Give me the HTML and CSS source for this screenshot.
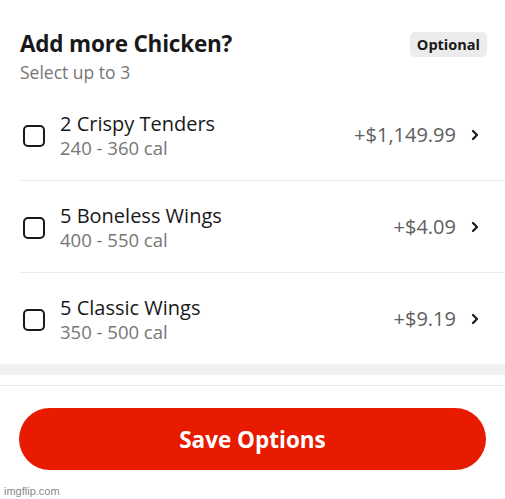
FILE: index.html
```html
<!DOCTYPE html>
<html lang="en">
<head>
    <meta charset="UTF-8">
    <meta name="viewport" content="width=device-width, initial-scale=1.0">
    <title>Add more Chicken?</title>
    <link rel="stylesheet" href="styles.css">
</head>
<body>
    <div class="header">
        <div class="header-top">
            <h1>Add more Chicken?</h1>
            <span class="badge">Optional</span>
        </div>
        <p class="sub">Select up to 3</p>
    </div>

    <div class="options">
        <div class="option">
            <span class="check"></span>
            <div class="info">
                <div class="name">2 Crispy Tenders</div>
                <div class="cal">240 - 360 cal</div>
            </div>
            <span class="price">+$1,149.99</span>
            <svg class="chev" viewBox="0 0 10 12" width="10" height="12"><path d="M3 2 L7 6 L3 10" fill="none" stroke="#191919" stroke-width="2.2" stroke-linecap="round" stroke-linejoin="round"/></svg>
        </div>
        <div class="option">
            <span class="check"></span>
            <div class="info">
                <div class="name">5 Boneless Wings</div>
                <div class="cal">400 - 550 cal</div>
            </div>
            <span class="price">+$4.09</span>
            <svg class="chev" viewBox="0 0 10 12" width="10" height="12"><path d="M3 2 L7 6 L3 10" fill="none" stroke="#191919" stroke-width="2.2" stroke-linecap="round" stroke-linejoin="round"/></svg>
        </div>
        <div class="option">
            <span class="check"></span>
            <div class="info">
                <div class="name">5 Classic Wings</div>
                <div class="cal">350 - 500 cal</div>
            </div>
            <span class="price">+$9.19</span>
            <svg class="chev" viewBox="0 0 10 12" width="10" height="12"><path d="M3 2 L7 6 L3 10" fill="none" stroke="#191919" stroke-width="2.2" stroke-linecap="round" stroke-linejoin="round"/></svg>
        </div>
    </div>

    <div class="band"></div>

    <div class="footer">
        <button type="button" class="save-btn">Save Options</button>
    </div>

    <div class="watermark">imgflip.com</div>
</body>
</html>
```

FILE: styles.css
```css
body {
    margin: 0;
    font-family: "Open Sans", Arial, sans-serif;
    color: #191919;
    background-color: #fff;
    width: 505px;
    height: 499px;
    overflow: hidden;
    position: relative;
}

.header {
    padding: 29px 18px 0 20px;
}

.header-top {
    display: flex;
    justify-content: space-between;
    align-items: center;
}

.header h1 {
    margin: 0;
    font-size: 22.5px;
    font-weight: 700;
    line-height: 30px;
    letter-spacing: -0.2px;
}

.badge {
    background-color: #ececec;
    border-radius: 5px;
    font-size: 14.5px;
    font-weight: 700;
    padding: 3px 7px;
    line-height: 19px;
}

.sub {
    margin: 2px 0 0;
    font-size: 17.5px;
    color: #767676;
    line-height: 22px;
}

.options {
    margin-top: 6px;
}

.option {
    display: flex;
    align-items: center;
    height: 91px;
    margin-left: 20px;
    padding-right: 25px;
    border-bottom: 1px solid #ebebeb;
}

.option:last-child {
    border-bottom: none;
}

.check {
    width: 18px;
    height: 18px;
    border: 2.5px solid #191919;
    border-radius: 5px;
    margin-left: 3px;
    margin-right: 15px;
    margin-top: 2px;
}

.info {
    flex: 1;
    padding-top: 1px;
}

.name {
    font-size: 20px;
    line-height: 26px;
}

.cal {
    font-size: 18.5px;
    color: #767676;
    line-height: 22px;
}

.price {
    font-size: 20px;
    color: #606060;
    margin-right: 14px;
}

.chev {
    display: block;
}

.band {
    height: 11px;
    background-color: #f1f1f1;
    border-bottom: 10px solid #fff;
}

.footer {
    border-top: 1px solid #e8e8e8;
    padding: 22px 19px 0 19px;
}

.save-btn {
    display: block;
    width: 100%;
    height: 62px;
    border: none;
    border-radius: 31px;
    background-color: #e81a00;
    color: #fff;
    font-family: "Open Sans", Arial, sans-serif;
    font-size: 22.5px;
    font-weight: 700;
}

.watermark {
    position: absolute;
    left: 4px;
    bottom: 2px;
    font-family: "Liberation Sans", Arial, sans-serif;
    font-size: 11px;
    color: #8a8a8a;
}
```
